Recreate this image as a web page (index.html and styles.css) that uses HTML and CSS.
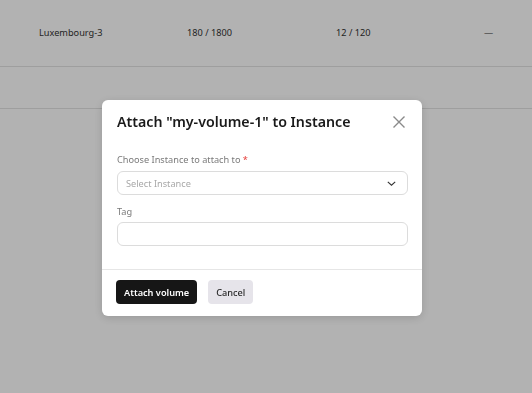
FILE: index.html
```html
<!DOCTYPE html>
<html lang="en">
<head>
    <meta charset="UTF-8">
    <meta name="viewport" content="width=device-width, initial-scale=1.0">
    <title>Volumes</title>
    <link rel="stylesheet" href="styles.css">
</head>
<body>

    <div id="page">
        <div class="row">
            <div>Luxembourg-3</div>
            <div>180 / 1800</div>
            <div>12 / 120</div>
            <div>—</div>
        </div>
        <div class="spacer"></div>
    </div>

    <div id="overlay">
        <div class="modal">
            <div class="modalHead">
                <h2>Attach "my-volume-1" to Instance</h2>
                <button class="close" aria-label="Close">
                    <svg width="14" height="14" viewBox="0 0 14 14">
                        <path d="M1.5 1.5 L12.5 12.5 M12.5 1.5 L1.5 12.5" stroke="#8a8a8a" stroke-width="1.4" fill="none"/>
                    </svg>
                </button>
            </div>

            <div class="modalBody">
                <label class="fieldLabel">Choose Instance to attach to <span class="req">*</span></label>
                <div class="select">
                    <span>Select Instance</span>
                    <svg width="9" height="5" viewBox="0 0 9 5">
                        <path d="M0.8 0.8 L4.5 4.2 L8.2 0.8" stroke="#333" stroke-width="1.1" fill="none"/>
                    </svg>
                </div>

                <label class="fieldLabel tagLabel">Tag</label>
                <input type="text" class="input">
            </div>

            <div class="modalFoot">
                <button class="primary">Attach volume</button>
                <button class="secondary">Cancel</button>
            </div>
        </div>
    </div>

</body>
</html>
```

FILE: styles.css
```css
*{
    margin: 0;
    padding: 0;
    box-sizing: border-box;
}
body{
    background-color: #fff;
    font-family: "Noto Sans", "Open Sans", sans-serif;
    color: #222;
}
#page{
    width: 532px;
}
.row{
    height: 67px;
    display: grid;
    grid-template-columns: 148px 149px 148px 1fr;
    align-items: center;
    padding-left: 39px;
    padding-bottom: 1px;
    font-size: 9.2px;
    color: #333;
    border-bottom: 1px solid #e2e2e2;
}
.spacer{
    height: 42px;
    border-bottom: 1px solid #e2e2e2;
}
#overlay{
    position: fixed;
    inset: 0;
    background-color: rgba(0, 0, 0, 0.3);
    padding: 100px 0 0 102px;
}
.modal{
    width: 320px;
    height: 216px;
    background-color: #fff;
    border-radius: 6px;
    box-shadow: 0 2px 10px rgba(0, 0, 0, 0.15);
    display: flex;
    flex-direction: column;
}
.modalHead{
    display: flex;
    justify-content: space-between;
    align-items: center;
    padding: 12px 16px 0 15px;
}
.modalHead h2{
    font-size: 14.2px;
    font-weight: 600;
    line-height: 20px;
    color: #1a1a1a;
}
.close{
    background: none;
    border: none;
    width: 14px;
    height: 14px;
    display: flex;
}
.modalBody{
    padding: 21px 14px 0 15px;
    display: flex;
    flex-direction: column;
}
.fieldLabel{
    font-size: 9.2px;
    line-height: 14px;
    color: #7a7a7a;
}
.req{
    color: #e53935;
}
.select{
    margin-top: 4px;
    height: 24px;
    border: 1px solid #dcdcdc;
    border-radius: 6px;
    display: flex;
    justify-content: space-between;
    align-items: center;
    padding: 0 11px 0 8px;
    font-size: 9.2px;
    color: #a8a8a8;
}
.tagLabel{
    margin-top: 10px;
}
.input{
    margin-top: 3px;
    height: 24px;
    border: 1px solid #dcdcdc;
    border-radius: 6px;
    outline: none;
}
.modalFoot{
    margin-top: auto;
    border-top: 1px solid #e6e6e6;
    padding: 10px 14px 12px 14px;
    display: flex;
    gap: 11px;
}
.modalFoot button{
    height: 24px;
    border: none;
    border-radius: 4px;
    font-family: "Noto Sans", "Open Sans", sans-serif;
    font-size: 9.2px;
    font-weight: 600;
    padding: 0 8px;
}
.primary{
    background-color: #161616;
    color: #fff;
}
.secondary{
    background-color: #e6e4ea;
    color: #2a2a2a;
    font-weight: 500 !important;
}
```
